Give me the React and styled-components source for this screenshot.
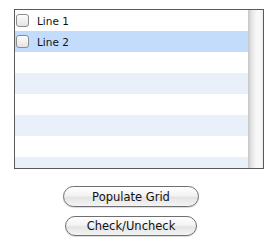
import React from 'react'
import styled, { createGlobalStyle } from 'styled-components'

const Global = createGlobalStyle`
  html, body {
    margin: 0;
    background: #fff;
  }
  body {
    font-family: "DejaVu Sans", "Liberation Sans", sans-serif;
  }
`

const Page = styled.div`
  width: 269px;
  height: 248px;
  padding: 9px 0 0 14px;
  box-sizing: border-box;
`

const Frame = styled.div`
  width: 250px;
  height: 160px;
  box-sizing: border-box;
  border: 1px solid #5a5a5a;
  display: flex;
  overflow: hidden;
`

const List = styled.div`
  flex: 1;
  display: flex;
  flex-direction: column;
`

const Row = styled.div`
  height: 21px;
  flex: none;
  display: flex;
  align-items: center;
  padding-left: 1px;
  background: ${ p => p.selected ? '#c3dcfb' : p.odd ? '#e9f0f9' : '#fff' };
`

const Check = styled.span`
  width: 13px;
  height: 13px;
  box-sizing: border-box;
  border: 1px solid #8c8c8c;
  border-radius: 3px;
  background: linear-gradient(#fdfdfd, #e4e4e4);
  box-shadow: inset 0 1px 1px rgba(255, 255, 255, .8);
  flex: none;
`

const Label = styled.span`
  margin-left: 8px;
  font-size: 10.5px;
  color: #111;
`

const Scrollbar = styled.div`
  width: 15px;
  flex: none;
  background: linear-gradient(to right, #c6c6c6 0%, #e6e6e6 25%, #f7f7f7 55%, #f9f9f9 80%, #ececec 100%);
`

const Buttons = styled.div`
  width: 234px;
  margin-top: 17px;
  display: flex;
  flex-direction: column;
  align-items: center;
  gap: 9px;
`

const Button = styled.button`
  width: ${ p => p.w }px;
  height: ${ p => p.h }px;
  box-sizing: border-box;
  border: 1px solid #6f6f6f;
  border-radius: 11px;
  background: linear-gradient(#ffffff 0%, #f3f3f3 45%, #e4e4e4 55%, #f4f4f4 100%);
  font-family: "DejaVu Sans", sans-serif;
  font-size: 11.5px;
  color: #111;
  padding: 0;
  box-shadow: 0 1px 1px rgba(0, 0, 0, .15);
`

const rows = Array.from({ length: 8 }, (_, i) => i)
const lines = ['Line 1', 'Line 2']

export default () => (
  <Page>
    <Global />
    <Frame>
      <List>
        {
          rows.map(i =>
            <Row key={ i } odd={ i % 2 === 1 } selected={ i === 1 }>
              {
                lines[i] && <>
                  <Check />
                  <Label children={ lines[i] } />
                </>
              }
            </Row>
          )
        }
      </List>
      <Scrollbar />
    </Frame>
    <Buttons>
      <Button w={ 136 } h={ 21 }>Populate Grid</Button>
      <Button w={ 132 } h={ 20 }>Check/Uncheck</Button>
    </Buttons>
  </Page>
)
